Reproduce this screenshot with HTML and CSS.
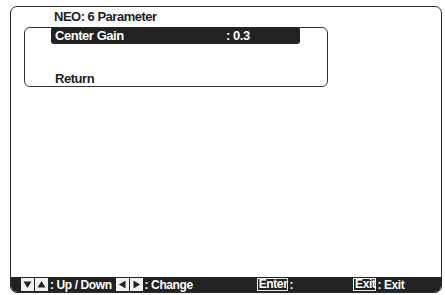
FILE: index.html
```html
<!DOCTYPE html>
<html>
<head>
<meta charset="utf-8">
<link rel="stylesheet" href="styles.css">
</head>
<body>
<div class="frame">
  <div class="title">NEO: 6 Parameter</div>
  <div class="menu">
    <div class="item selected"><span class="label">Center Gain</span><span class="value">: 0.3</span></div>
    <div class="item ret">Return</div>
  </div>
  <div class="spacer"></div>
  <div class="footer">
    <span class="group g1">
      <span class="key"><svg width="11" height="11" viewBox="0 0 11 11"><path d="M1.5 2.5 H9.5 L5.5 9 Z" fill="#222"/></svg></span><span class="key"><svg width="11" height="11" viewBox="0 0 11 11"><path d="M1.5 8.5 H9.5 L5.5 2 Z" fill="#222"/></svg></span><span class="txt">: Up / Down</span>
    </span>
    <span class="group g2">
      <span class="key"><svg width="11" height="11" viewBox="0 0 11 11"><path d="M8.5 1.5 V9.5 L2 5.5 Z" fill="#222"/></svg></span><span class="key"><svg width="11" height="11" viewBox="0 0 11 11"><path d="M2.5 1.5 V9.5 L9 5.5 Z" fill="#222"/></svg></span><span class="txt">: Change</span>
    </span>
    <span class="group g3"><span class="box">Enter</span><span class="txt">:</span></span>
    <span class="group g4"><span class="box">Exit</span><span class="txt">: Exit</span></span>
  </div>
</div>
</body>
</html>
```
FILE: styles.css
```css
html, body {
  margin: 0;
  padding: 0;
  background: #fff;
}
body {
  font-family: "Liberation Sans", Arial, sans-serif;
  font-weight: bold;
  color: #1e1e1e;
}
.frame {
  margin: 6px 0 0 10px;
  width: 430px;
  height: 285px;
  border: 1px solid #2a2a2a;
  border-radius: 7px;
  display: flex;
  flex-direction: column;
  overflow: hidden;
}
.title {
  height: 20px;
  padding-left: 43px;
  font-size: 13px;
  letter-spacing: -0.5px;
  line-height: 16px;
  padding-top: 2px;
  box-sizing: border-box;
}
.menu {
  margin-left: 13px;
  width: 302px;
  height: 58px;
  border: 1px solid #333;
  border-radius: 6px;
  display: flex;
  flex-direction: column;
}
.item {
  font-size: 13px;
  line-height: 17px;
  letter-spacing: -0.45px;
}
.selected {
  margin-top: -1px;
  margin-left: 26px;
  width: 249px;
  height: 18px;
  background: #222;
  color: #fff;
  border-radius: 3px;
  display: flex;
  padding-left: 4px;
  box-sizing: border-box;
}
.label {
  width: 171px;
}
.ret {
  margin-top: 26px;
  margin-left: 30px;
}
.spacer {
  flex: 1;
}
.footer {
  height: 15px;
  background: #222;
  color: #fff;
  display: flex;
  align-items: center;
  font-size: 12px;
  letter-spacing: -0.4px;
  line-height: 14px;
}
.group {
  display: flex;
  align-items: center;
}
.g1 { margin-left: 10px; }
.g2 { margin-left: 4px; }
.g3 { margin-left: 64px; }
.g4 { margin-left: 60px; }
.key {
  width: 11px;
  height: 11px;
  background: #f2f2f2;
  border: 1px solid #f2f2f2;
  margin-right: 1px;
  display: flex;
}
.key svg { display: block; }
.txt {
  margin-left: 1px;
}
.box {
  border: 1px solid #eee;
  padding: 0 0 0 1px;
  line-height: 11px;
  height: 11px;
}
```
